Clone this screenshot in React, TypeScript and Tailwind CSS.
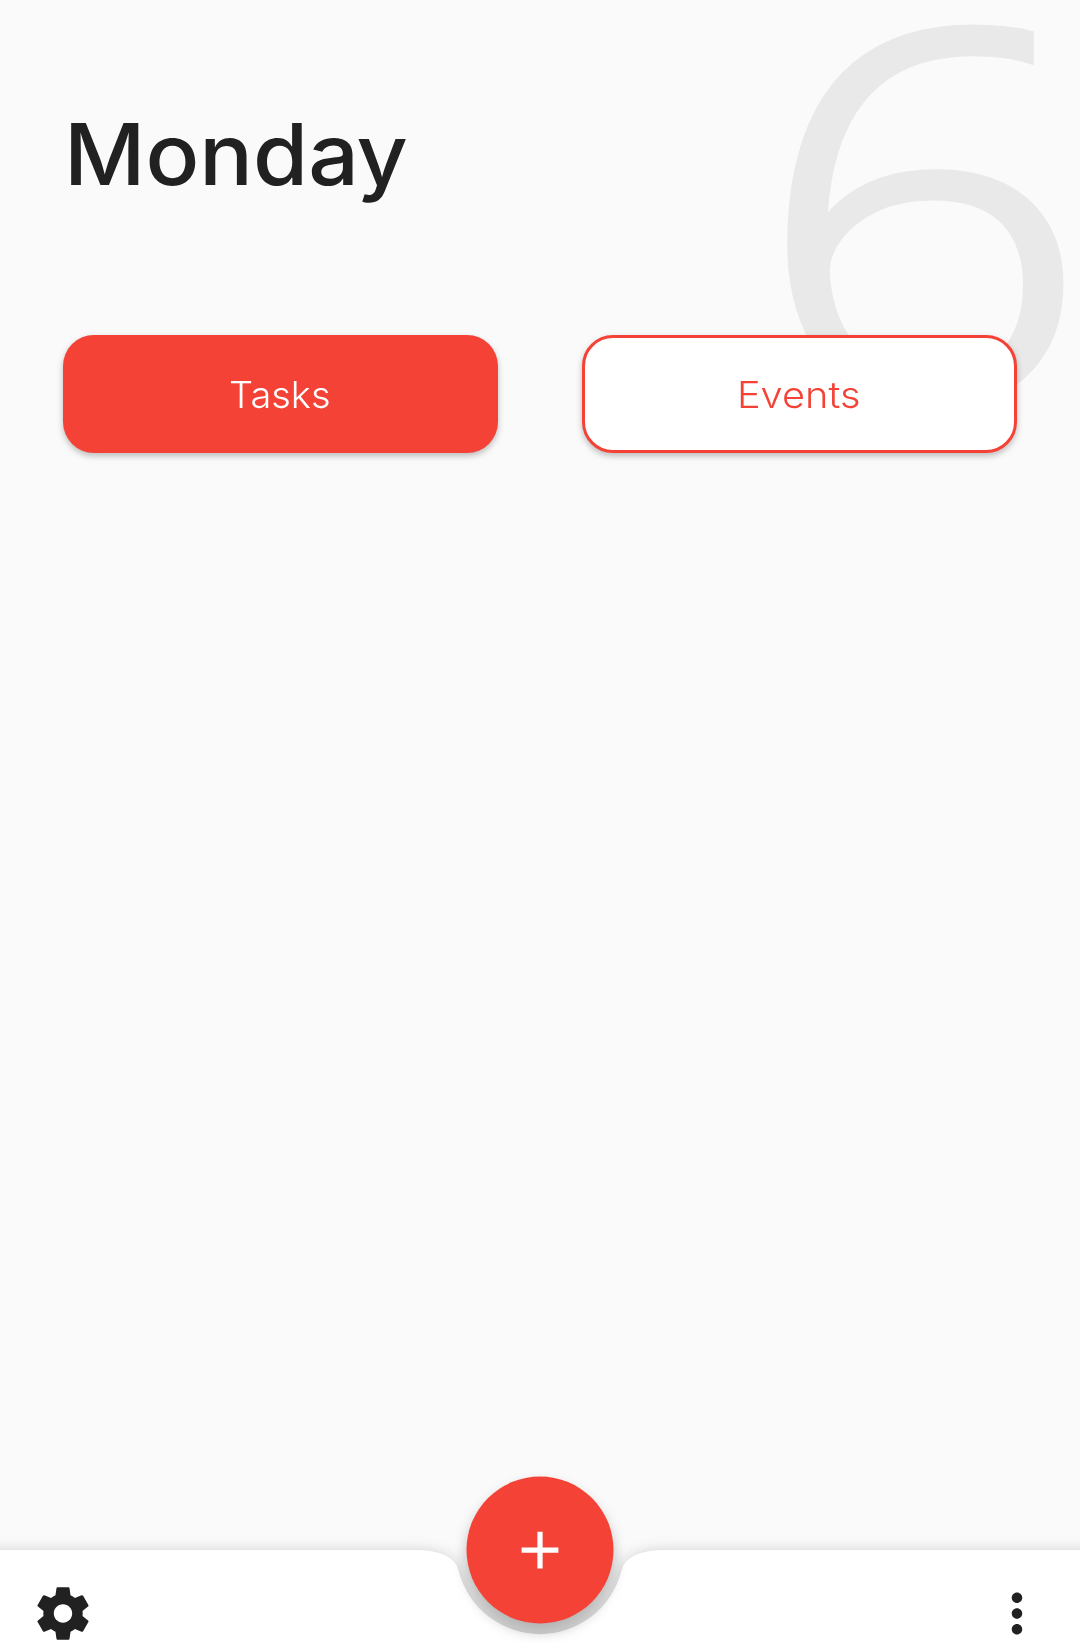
import { MdAdd, MdMoreVert } from "react-icons/md";

function GearIcon() {
  return (
    <svg width="63" height="63" viewBox="0 0 24 24" fill="currentColor">
      <path d="M19.43 12.98c.04-.32.07-.64.07-.98s-.03-.66-.07-.98l2.11-1.65c.19-.15.24-.42.12-.64l-2-3.46c-.12-.22-.39-.3-.61-.22l-2.49 1c-.52-.4-1.08-.73-1.69-.98l-.38-2.65C14.46 2.18 14.25 2 14 2h-4c-.25 0-.46.18-.49.42l-.38 2.65c-.61.25-1.17.59-1.69.98l-2.49-1c-.23-.09-.49 0-.61.22l-2 3.46c-.13.22-.07.49.12.64l2.11 1.65c-.04.32-.07.65-.07.98s.03.66.07.98l-2.11 1.65c-.19.15-.24.42-.12.64l2 3.46c.12.22.39.3.61.22l2.49-1c.52.4 1.08.73 1.69.98l.38 2.65c.03.24.24.42.49.42h4c.25 0 .46-.18.49-.42l.38-2.65c.61-.25 1.17-.59 1.69-.98l2.49 1c.23.09.49 0 .61-.22l2-3.46c.12-.22.07-.49-.12-.64l-2.11-1.65zM12 15.5c-1.93 0-3.5-1.57-3.5-3.5s1.57-3.5 3.5-3.5 3.5 1.57 3.5 3.5-1.57 3.5-3.5 3.5z" />
    </svg>
  );
}

function Header() {
  return (
    <header className="relative h-[335px] px-[63px] pt-[103px]">
      <h1 className="ml-px w-max origin-left scale-x-[1.05] text-[85px] leading-[103px] font-medium text-[#212121]">
        Mond<span className="tracking-[-1px]">ay</span>
      </h1>
      <span className="absolute top-[2px] right-[-9px] w-max origin-right scale-x-[1.14] font-['Open_Sans'] text-[511px] leading-[400px] font-light text-[#e9e9e9] [-webkit-text-stroke:10px_#e9e9e9]">
        6
      </span>
    </header>
  );
}

function Tabs() {
  return (
    <nav className="relative flex justify-between px-[63px]">
      <button className="flex h-[118px] w-[435px] items-center justify-center rounded-[31px] bg-[#f44336] pt-[2px] pr-[2px] text-white shadow-[0_3px_6px_rgba(0,0,0,0.25)]">
        <span className="scale-x-[1.04] text-[36.5px] leading-none font-[350]">Tasks</span>
      </button>
      <button className="flex h-[118px] w-[435px] items-center justify-center rounded-[31px] border-[3px] border-[#f44336] bg-white pt-[2px] pr-px text-[#f44336] shadow-[0_3px_6px_rgba(0,0,0,0.25)]">
        <span className="scale-x-[1.09] text-[36.5px] leading-none font-[350]">Events</span>
      </button>
    </nav>
  );
}

function BottomBar() {
  return (
    <footer className="relative mt-auto h-[93px]">
      <svg className="absolute inset-0 overflow-visible" width="1080" height="93" viewBox="0 0 1080 93">
        <defs>
          <linearGradient id="notch" x1="0" y1="0" x2="0" y2="1">
            <stop offset="0.5" stopColor="#000" stopOpacity="0" />
            <stop offset="1" stopColor="#000" stopOpacity="0.06" />
          </linearGradient>
        </defs>
        <circle cx="540" cy="0" r="84" fill="url(#notch)" />
        <g className="drop-shadow-[0_2px_8px_rgba(0,0,0,0.2)]">
          <path
            d="M-30 0H414Q453.4 0 458.5 20.5A84 84 0 0 0 621.5 20.5Q626.6 0 666 0H1110V140H-30Z"
            fill="#fff"
          />
        </g>
      </svg>
      <div className="relative flex h-[126px] translate-x-[0.5px] items-center justify-between pr-[32px] pl-[31px] text-[63px] text-[#212121]">
        <button aria-label="Settings">
          <GearIcon />
        </button>
        <button aria-label="More">
          <MdMoreVert />
        </button>
      </div>
      <button
        aria-label="Add"
        className="absolute -top-[74px] left-[466px] flex size-[147px] translate-x-[0.5px] translate-y-[0.5px] items-center justify-center rounded-full bg-[#f44336] text-[63px] text-white shadow-[0_8px_14px_rgba(0,0,0,0.25)]"
      >
        <MdAdd />
      </button>
    </footer>
  );
}

export default function App() {
  return (
    <div className="flex h-[1643px] w-[1080px] flex-col overflow-hidden bg-[#fafafa] font-['Inter',sans-serif]">
      <Header />
      <Tabs />
      <BottomBar />
    </div>
  );
}
